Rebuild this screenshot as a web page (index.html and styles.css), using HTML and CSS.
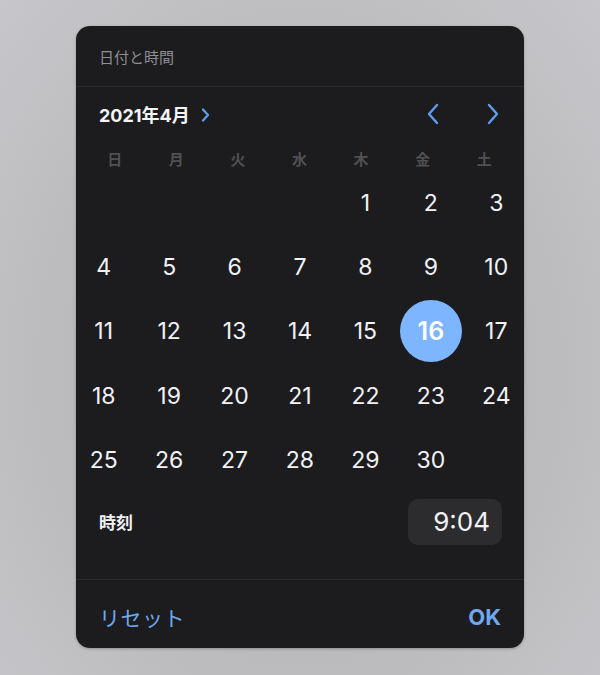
FILE: index.html
```html
<!DOCTYPE html>
<html lang="ja">
<head>
    <meta charset="UTF-8">
    <meta name="viewport" content="width=device-width, initial-scale=1.0">
    <title>日付と時間</title>
    <link rel="stylesheet" href="styles.css">
</head>
<body>
    <main class="screen">
        <div class="picker">
            <div class="picker-title">日付と時間</div>

            <div class="month-row">
                <div class="month-label">
                    2021年4月
                    <svg class="month-chevron" width="9" height="14" viewBox="0 0 9 14">
                        <path d="M2 1.5 L7 7 L2 12.5" fill="none" stroke="#5e9ef0" stroke-width="2.2" stroke-linecap="round" stroke-linejoin="round"/>
                    </svg>
                </div>
                <div class="month-nav">
                    <svg width="14" height="22" viewBox="0 0 14 22">
                        <path d="M11 2 L3 11 L11 20" fill="none" stroke="#5e9ef0" stroke-width="2.4" stroke-linecap="round" stroke-linejoin="round"/>
                    </svg>
                    <svg width="14" height="22" viewBox="0 0 14 22">
                        <path d="M3 2 L11 11 L3 20" fill="none" stroke="#5e9ef0" stroke-width="2.4" stroke-linecap="round" stroke-linejoin="round"/>
                    </svg>
                </div>
            </div>

            <div class="weekdays">
                <span>日</span><span>月</span><span>火</span><span>水</span><span>木</span><span>金</span><span>土</span>
            </div>

            <div class="days">
                <span></span><span></span><span></span><span></span>
                <span class="day">1</span><span class="day">2</span><span class="day">3</span>
                <span class="day">4</span><span class="day">5</span><span class="day">6</span><span class="day">7</span>
                <span class="day">8</span><span class="day">9</span><span class="day">10</span>
                <span class="day">11</span><span class="day">12</span><span class="day">13</span><span class="day">14</span>
                <span class="day">15</span><span class="day selected">16</span><span class="day">17</span>
                <span class="day">18</span><span class="day">19</span><span class="day">20</span><span class="day">21</span>
                <span class="day">22</span><span class="day">23</span><span class="day">24</span>
                <span class="day">25</span><span class="day">26</span><span class="day">27</span><span class="day">28</span>
                <span class="day">29</span><span class="day">30</span><span></span>
            </div>

            <div class="time-row">
                <span class="time-label">時刻</span>
                <span class="time-box">9:04</span>
            </div>

            <div class="picker-footer">
                <button type="button" class="btn-reset">リセット</button>
                <button type="button" class="btn-ok">OK</button>
            </div>
        </div>
    </main>
</body>
</html>
```

FILE: styles.css
```css
* {
    padding: 0;
    margin: 0;
    box-sizing: border-box;
}

body {
    font-family: Inter, "Noto Sans CJK JP", sans-serif;
    background: radial-gradient(ellipse at 50% 55%, #b3b3b5 0%, #b8b8ba 45%, #c7c7cb 100%);
    height: 675px;
    overflow: hidden;
}

.screen {
    display: flex;
    justify-content: center;
    padding-top: 26px;
}

.picker {
    width: 448px;
    height: 622px;
    background: #1c1c1e;
    border-radius: 14px;
    box-shadow: 0 1px 3px rgba(0, 0, 0, 0.25);
    color: #f2f2f7;
}

.picker-title {
    height: 61px;
    display: flex;
    align-items: center;
    padding: 0 23px;
    font-size: 15px;
    color: #8e8e93;
    border-bottom: 1px solid #2a2a2c;
}

.month-row {
    height: 54px;
    display: flex;
    align-items: center;
    justify-content: space-between;
    padding: 0 22px 0 23px;
}

.month-label {
    display: flex;
    align-items: center;
    gap: 11px;
    font-size: 18px;
    font-weight: 700;
    color: #f5f5f7;
}

.month-chevron {
    margin-top: 1px;
}

.month-nav {
    display: flex;
    gap: 46px;
    padding-right: 2px;
}

.weekdays,
.days {
    display: grid;
    grid-template-columns: repeat(7, 1fr);
}

.weekdays {
    margin: 0 9px 0 8px;
    height: 30px;
    padding-top: 8px;
    font-size: 15px;
    font-weight: 600;
    color: #505054;
    line-height: 22px;
    text-align: center;
}

.days {
    margin: 0 -5px;
    grid-auto-rows: 64.2px;
    align-items: center;
    justify-items: center;
}

.day {
    width: 62px;
    height: 62px;
    border-radius: 50%;
    display: flex;
    align-items: center;
    justify-content: center;
    font-size: 23px;
    font-weight: 400;
}

.day.selected {
    background: #7db5ff;
    color: #fff;
    font-weight: 600;
    font-size: 25px;
}

.time-row {
    display: flex;
    align-items: center;
    justify-content: space-between;
    padding: 7px 22px 34px 23px;
    border-bottom: 1px solid #2a2a2c;
}

.time-label {
    font-size: 17px;
    font-weight: 700;
}

.time-box {
    width: 94px;
    height: 46px;
    background: #2c2c2e;
    border-radius: 10px;
    display: flex;
    align-items: center;
    justify-content: flex-end;
    padding-right: 12px;
    font-size: 26px;
    font-weight: 400;
}

.picker-footer {
    height: 68px;
    display: flex;
    align-items: center;
    justify-content: space-between;
    padding: 6px 23px 0 23px;
}

.picker-footer button {
    background: none;
    border: none;
    font-family: inherit;
    color: #6fa8ee;
    cursor: pointer;
}

.btn-reset {
    font-size: 21px;
    font-weight: 400;
    letter-spacing: 0.5px;
}

.btn-ok {
    font-size: 22px;
    font-weight: 700;
}
```
